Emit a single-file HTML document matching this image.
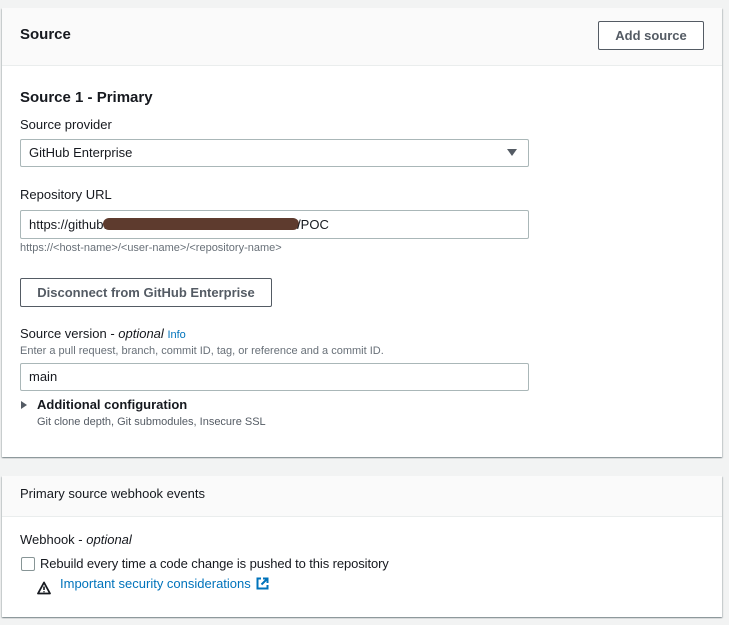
<!DOCTYPE html>
<html><head><meta charset="utf-8"><style>
body{margin:0;width:729px;height:625px;background:#f2f3f3;font-family:"Liberation Sans",Arial,sans-serif;color:#16191f;position:relative;overflow:hidden}
.a{position:absolute;white-space:nowrap}
.p{position:absolute;background:#fff;box-shadow:0 1px 1px rgba(0,28,36,.3),1px 1px 1px rgba(0,28,36,.15),-1px 1px 1px rgba(0,28,36,.15)}
.h{position:absolute;left:0;right:0;top:0;background:#fafafa;border-bottom:1px solid #eaeded}
.in{position:absolute;border:1px solid #aab7b8;border-radius:2px;background:#fff;box-sizing:border-box;font-size:13px;padding-left:8px}
.btn{position:absolute;border:1px solid #545b64;border-radius:2px;background:#fff;box-sizing:border-box;font-weight:bold;font-size:13px;color:#545b64;text-align:center}
.lb{font-size:13px}
.hp{font-size:11px;color:#687078}
</style></head><body>
<div class="p" style="left:2px;top:8px;width:720px;height:449px">
  <div class="h" style="height:57px"></div>
</div>
<div class="a" style="left:20px;top:26px;font-size:15px;font-weight:bold">Source</div>
<div class="btn" style="left:598px;top:21px;width:106px;height:29px;line-height:27px">Add source</div>
<div class="a" style="left:20px;top:89px;font-size:15px;font-weight:bold">Source 1 - Primary</div>
<div class="a lb" style="left:20px;top:117px">Source provider</div>
<div class="in" style="left:20px;top:139px;width:509px;height:28px;line-height:26px">GitHub Enterprise</div>
<div class="a" style="left:507px;top:149px;width:0;height:0;border-left:5px solid transparent;border-right:5px solid transparent;border-top:7px solid #545b64"></div>
<div class="a lb" style="left:20px;top:187px">Repository URL</div>
<div class="in" style="left:20px;top:210px;width:509px;height:29px;line-height:27px">https://github.<span style="display:inline-block;width:196px;height:12px;background:#5e3b2e;border-radius:6px;vertical-align:-1px;margin-left:-4px;margin-right:-2px"></span>/POC</div>
<div class="a hp" style="left:20px;top:242px">https://&lt;host-name&gt;/&lt;user-name&gt;/&lt;repository-name&gt;</div>
<div class="btn" style="left:20px;top:278px;width:252px;height:29px;line-height:27px">Disconnect from GitHub Enterprise</div>
<div class="a lb" style="left:20px;top:326px">Source version - <i>optional</i> <span style="font-size:11px;color:#0073bb">Info</span></div>
<div class="a hp" style="left:20px;top:345px">Enter a pull request, branch, commit ID, tag, or reference and a commit ID.</div>
<div class="in" style="left:20px;top:363px;width:509px;height:28px;line-height:26px">main</div>
<div class="a" style="left:21px;top:401px;width:0;height:0;border-top:4px solid transparent;border-bottom:4px solid transparent;border-left:6px solid #545b64"></div>
<div class="a" style="left:37px;top:397px;font-size:13px;font-weight:bold">Additional configuration</div>
<div class="a hp" style="left:37px;top:416px;color:#545b64">Git clone depth, Git submodules, Insecure SSL</div>

<div class="p" style="left:2px;top:476px;width:720px;height:141px">
  <div class="h" style="height:40px"></div>
</div>
<div class="a lb" style="left:20px;top:486px">Primary source webhook events</div>
<div class="a lb" style="left:20px;top:532px">Webhook - <i>optional</i></div>
<div class="a" style="left:21px;top:557px;width:12px;height:12px;border:1px solid #879596;border-radius:2px;background:#fff"></div>
<div class="a lb" style="left:40px;top:556px;letter-spacing:-0.1px">Rebuild every time a code change is pushed to this repository</div>
<svg class="a" style="left:37px;top:581px" width="14" height="14" viewBox="0 0 14 14"><path d="M7 1.5L1 12.5H13Z" fill="none" stroke="#16191f" stroke-width="1.8" stroke-linejoin="round"/><path d="M7 5.5V9M7 10.3V11.3" stroke="#16191f" stroke-width="1.6"/></svg>
<div class="a lb" style="left:60px;top:576px;color:#0073bb">Important security considerations</div>
<svg class="a" style="left:256px;top:577px" width="13" height="13" viewBox="0 0 13 13"><path d="M5 1.5H1.5V11.5H11.5V8" fill="none" stroke="#0073bb" stroke-width="2"/><path d="M7 1.5H11.5V6M11.5 1.5L5.5 7.5" fill="none" stroke="#0073bb" stroke-width="2"/></svg>
</body></html>
